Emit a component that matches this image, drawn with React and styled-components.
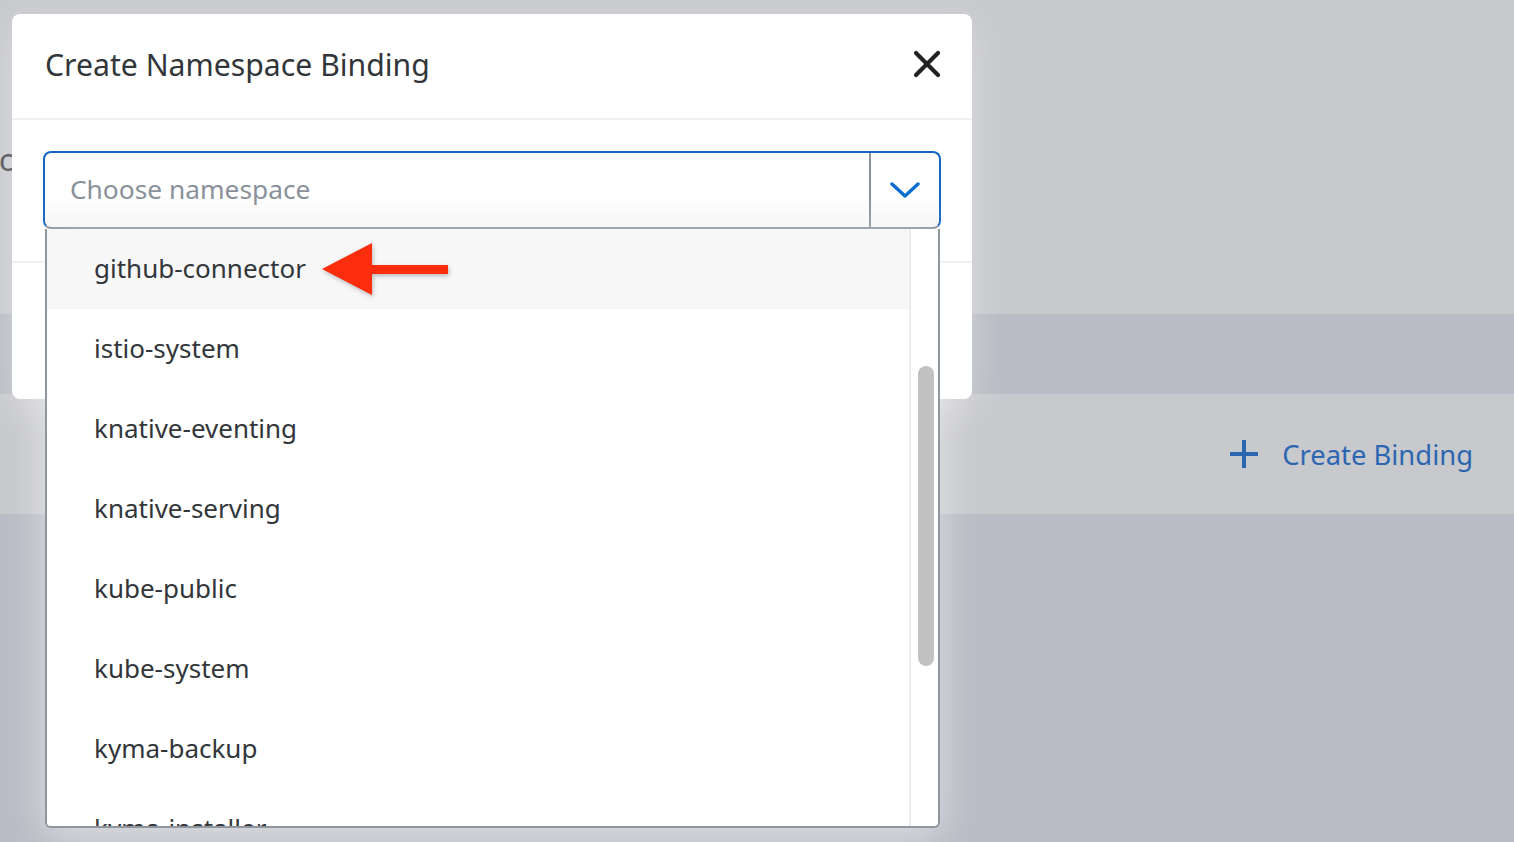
import React from 'react';
import styled, { createGlobalStyle } from 'styled-components';

const GlobalStyle = createGlobalStyle`
  html, body {
    margin: 0;
    padding: 0;
    overflow: hidden;
  }
  body {
    font-family: "Noto Sans", "Open Sans", Arial, sans-serif;
    color: #32363a;
  }
`;

const namespaces = [
  'github-connector',
  'istio-system',
  'knative-eventing',
  'knative-serving',
  'kube-public',
  'kube-system',
  'kyma-backup',
  'kyma-installer',
];

const Page = styled.div`
  position: relative;
  width: 1514px;
  height: 842px;
  overflow: hidden;
  display: flex;
  flex-direction: column;
`;

const Band = styled.div`
  flex: ${(p) => (p.$grow ? '1' : `0 0 ${p.$h}px`)};
  background: ${(p) => (p.$dark ? '#b9bcc4' : '#c8c9cd')};
  display: flex;
  align-items: center;
  justify-content: ${(p) => p.$justify || 'flex-start'};
  padding: 0 41px 0 0;
`;

const Peek = styled.span`
  margin: 4px 0 0 -1px;
  font-size: 30px;
  color: #4a4d51;
`;

const CreateButton = styled.button`
  display: flex;
  align-items: center;
  gap: 24px;
  border: none;
  background: none;
  padding: 0;
  font-family: inherit;
  font-size: 27.4px;
  color: #2d66b0;
  cursor: pointer;
`;

const Modal = styled.div`
  position: absolute;
  left: 12px;
  top: 14px;
  width: 960px;
  background: #fff;
  border-radius: 8px;
  box-shadow: 0 10px 40px rgba(255, 255, 255, 0.35);
`;

const Header = styled.div`
  height: 106px;
  display: flex;
  align-items: center;
  justify-content: space-between;
  padding: 0 29px 4px 33px;
  box-sizing: border-box;
  border-bottom: 2px solid #eeeeee;
`;

const Title = styled.h1`
  margin: 0;
  font-size: 30.2px;
  font-weight: 400;
  color: #32363a;
`;

const CloseButton = styled.button`
  width: 32px;
  height: 32px;
  border: none;
  background: none;
  padding: 0;
  display: flex;
  align-items: center;
  justify-content: center;
  cursor: pointer;
`;

const Body = styled.div`
  padding: 31px 31px 32px 31px;
  border-bottom: 2px solid #eeeeee;
`;

const SelectWrap = styled.div`
  position: relative;
`;

const Select = styled.div`
  height: 78px;
  box-sizing: border-box;
  display: flex;
  border: 2px solid #1565c0;
  border-bottom-color: #8a929b;
  border-radius: 8px;
  background: linear-gradient(#fff 55%, #f6f6f6);
  overflow: hidden;
`;

const Placeholder = styled.div`
  flex: 1;
  display: flex;
  align-items: center;
  padding: 0 0 2px 25px;
  font-size: 26.3px;
  color: #89919a;
`;

const Toggle = styled.div`
  flex: 0 0 68px;
  border-left: 2px solid #8c939b;
  display: flex;
  align-items: center;
  justify-content: center;
`;

const Dropdown = styled.div`
  position: absolute;
  top: 100%;
  left: 2px;
  right: 1px;
  height: 599px;
  box-sizing: border-box;
  display: flex;
  background: #fff;
  border: 2px solid #8f969e;
  border-top: none;
  border-radius: 0 0 6px 6px;
  box-shadow: 0 8px 40px rgba(255, 255, 255, 0.55);
  overflow: hidden;
  z-index: 2;
`;

const List = styled.ul`
  flex: 1;
  margin: 0;
  padding: 0;
  list-style: none;
  overflow: hidden;
`;

const Item = styled.li`
  height: 80px;
  box-sizing: border-box;
  display: flex;
  align-items: center;
  padding: 0 0 3px 47px;
  font-size: 26px;
  color: #32363a;
  background: ${(p) => (p.$hover ? '#f7f7f7' : '#fff')};
`;

const Track = styled.div`
  flex: 0 0 29px;
  border-left: 2px solid #ececec;
  padding: 137px 0 0 7px;
  box-sizing: border-box;
`;

const Thumb = styled.div`
  width: 16px;
  height: 300px;
  border-radius: 8px;
  background: #c1c1c1;
`;

const Footer = styled.div`
  height: 136px;
`;

const Arrow = styled.svg`
  position: absolute;
  left: 318px;
  top: 238px;
  z-index: 3;
  filter: drop-shadow(1px 2px 2px rgba(0, 0, 0, 0.25));
`;

export default function App() {
  return (
    <>
      <GlobalStyle />
      <Page>
        <Band $h={314}>
          <Peek>c</Peek>
        </Band>
        <Band $h={80} $dark />
        <Band $h={120} $justify="flex-end">
          <CreateButton>
            <svg width="28" height="28" viewBox="0 0 28 28">
              <path d="M14 0v28M0 14h28" stroke="#2b67b1" strokeWidth="4" />
            </svg>
            Create Binding
          </CreateButton>
        </Band>
        <Band $grow $dark />

        <Modal>
          <Header>
            <Title>Create Namespace Binding</Title>
            <CloseButton aria-label="close">
              <svg width="28" height="28" viewBox="0 0 28 28">
                <path
                  d="M3 3l22 22M25 3L3 25"
                  stroke="#222"
                  strokeWidth="4.2"
                  strokeLinecap="round"
                />
              </svg>
            </CloseButton>
          </Header>
          <Body>
            <SelectWrap>
              <Select>
                <Placeholder>Choose namespace</Placeholder>
                <Toggle>
                  <svg width="30" height="18" viewBox="0 0 30 18">
                    <path
                      d="M2 3l13 12L28 3"
                      fill="none"
                      stroke="#0a6ed1"
                      strokeWidth="3.4"
                      strokeLinecap="round"
                      strokeLinejoin="round"
                    />
                  </svg>
                </Toggle>
              </Select>
              <Dropdown>
                <List>
                  {namespaces.map((n, i) => (
                    <Item key={n} $hover={i === 0}>
                      {n}
                    </Item>
                  ))}
                </List>
                <Track>
                  <Thumb />
                </Track>
              </Dropdown>
            </SelectWrap>
          </Body>
          <Footer />
        </Modal>

        <Arrow width="136" height="62" viewBox="0 0 136 62">
          <path d="M4 31L54 5V27H130V36H54V57Z" fill="#fb2d0c" />
        </Arrow>
      </Page>
    </>
  );
}
